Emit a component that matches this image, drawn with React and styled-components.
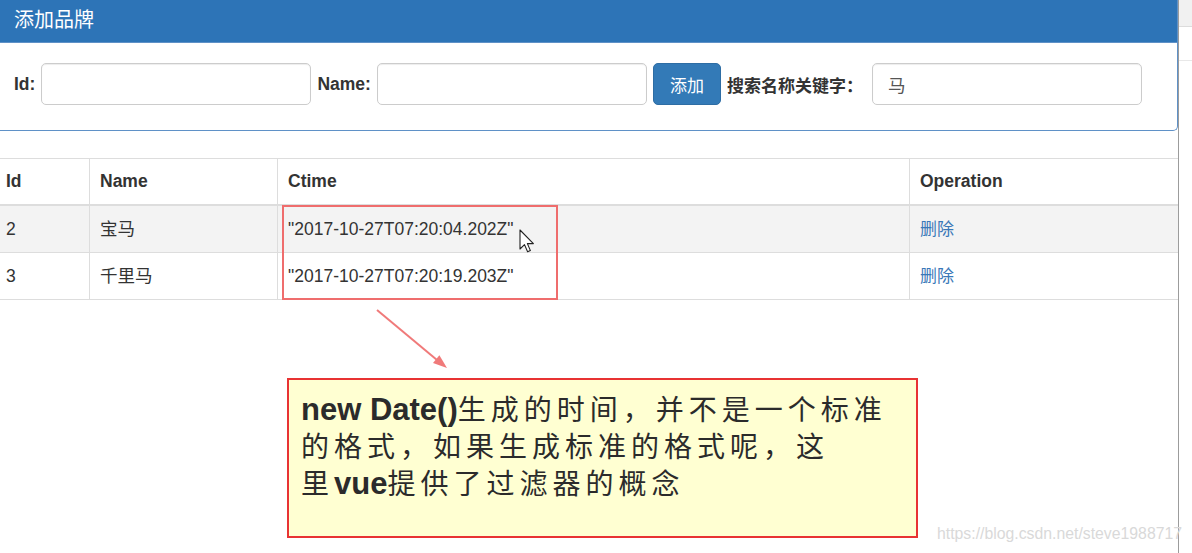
import React from "react";
import styled, { createGlobalStyle } from "styled-components";

const GlobalStyle = createGlobalStyle`
  html, body { margin: 0; padding: 0; background: #fff; }
  body {
    font-family: "Liberation Sans", "Noto Sans CJK SC", sans-serif;
    color: #333;
    overflow: hidden;
  }
  * { box-sizing: border-box; }
`;

const Screen = styled.div`
  position: relative;
  width: 1192px;
  height: 553px;
  display: flex;
  overflow: hidden;
  background: #fff;
`;

const Main = styled.div`
  flex: 0 0 1178px;
  min-width: 0;
`;

const Inner = styled.div`
  margin-left: -5px;
  width: 1183px;
`;

const SideRail = styled.div`
  flex: 1;
  border-left: 1px solid #9c9c9c;
  display: flex;
  flex-direction: column;
`;

const RailBand = styled.div`
  height: ${(p) => p.$h}px;
  background: ${(p) => p.$bg || "#fff"};
  border-bottom: 1px solid ${(p) => p.$line || "#e4e4e4"};
`;

const Panel = styled.div`
  border: 1px solid #5f91c7;
  border-top: none;
  border-radius: 0 0 5px 5px;
  margin-bottom: 27px;
  overflow: hidden;
`;

const PanelHeading = styled.div`
  height: 43px;
  background: #2d74b7;
  padding: 8px 18px 0;
  border-bottom: 1px solid #5f91c7;
`;

const PanelTitle = styled.h3`
  margin: 0;
  font-family: "Noto Sans CJK SC", "Liberation Sans", sans-serif;
  font-size: 20px;
  font-weight: 400;
  line-height: 22px;
  color: #fff;
`;

const PanelBody = styled.div`
  padding: 20px 18px 25px;
`;

const FormRow = styled.div`
  display: flex;
  align-items: center;
  gap: 6px;
`;

const Label = styled.label`
  font-size: 17.5px;
  font-weight: 700;
  color: #333;
  white-space: nowrap;
`;

const HanLabel = styled(Label)`
  font-family: "Noto Sans CJK SC", sans-serif;
  font-size: 17px;
  margin-right: 3px;
`;

const Input = styled.input`
  width: 270px;
  height: 42px;
  border: 1px solid #ccc;
  border-radius: 5px;
  padding: 0 15px;
  font-family: "Noto Sans CJK SC", "Liberation Sans", sans-serif;
  font-size: 17.5px;
  color: #555;
  box-shadow: inset 0 1px 1px rgba(0, 0, 0, 0.075);
  outline: none;
  background: #fff;
`;

const Button = styled.button`
  height: 42px;
  padding: 0 16px;
  background: #337ab7;
  border: 1px solid #2e6da4;
  border-radius: 5px;
  color: #fff;
  font-family: "Noto Sans CJK SC", sans-serif;
  font-size: 17px;
  cursor: pointer;
`;

const Table = styled.table`
  width: 1183px;
  table-layout: fixed;
  border-collapse: collapse;
  border: 1px solid #ddd;
`;

const Th = styled.th`
  text-align: left;
  font-size: 17.5px;
  font-weight: 700;
  line-height: 25px;
  padding: 10px;
  border: 1px solid #ddd;
  border-bottom: 2px solid #ddd;
  color: #333;
`;

const Tr = styled.tr`
  background: ${(p) => (p.$striped ? "#f3f3f3" : "#fff")};
`;

const Td = styled.td`
  font-family: "Liberation Sans", "Noto Sans CJK SC", sans-serif;
  font-size: 17.5px;
  line-height: 24px;
  height: 47px;
  padding: 0 10px;
  border: 1px solid #ddd;
  color: #333;
  white-space: nowrap;
  vertical-align: middle;
`;

const Link = styled.a`
  color: #3a78b8;
  text-decoration: none;
  font-family: "Noto Sans CJK SC", sans-serif;
  font-size: 17px;
`;

const RedFrame = styled.div`
  position: absolute;
  left: 282px;
  top: 205px;
  width: 276px;
  height: 95px;
  border: 2px solid #ef6d6d;
  pointer-events: none;
`;

const Overlay = styled.svg`
  position: absolute;
  overflow: visible;
  pointer-events: none;
`;

const Note = styled.div`
  position: absolute;
  left: 287px;
  top: 378px;
  width: 631px;
  height: 160px;
  background: #ffffd2;
  border: 2px solid #e83333;
  padding: 10px 12px 0;
`;

const NoteLine = styled.div`
  height: 37px;
  line-height: 37px;
  white-space: nowrap;
  color: #2b2b2b;
`;

const Latin = styled.span`
  font-family: "Liberation Sans", sans-serif;
  font-weight: 700;
  font-size: 31px;
`;

const Han = styled.span`
  font-family: "Noto Sans CJK SC", sans-serif;
  font-weight: 400;
  font-size: 28px;
  letter-spacing: 5px;
`;

const Watermark = styled.div`
  position: absolute;
  left: 937px;
  top: 525px;
  font-family: "Liberation Sans", sans-serif;
  font-size: 15.8px;
  color: #d9d9d9;
  white-space: nowrap;
  pointer-events: none;
`;

const rows = [
  { id: 2, name: "宝马", ctime: '"2017-10-27T07:20:04.202Z"' },
  { id: 3, name: "千里马", ctime: '"2017-10-27T07:20:19.203Z"' },
];

export default function App() {
  return (
    <>
      <GlobalStyle />
      <Screen>
        <Main>
          <Inner>
            <Panel>
              <PanelHeading>
                <PanelTitle>添加品牌</PanelTitle>
              </PanelHeading>
              <PanelBody>
                <FormRow>
                  <Label>Id:</Label>
                  <Input />
                  <Label>Name:</Label>
                  <Input />
                  <Button>添加</Button>
                  <HanLabel>搜索名称关键字：</HanLabel>
                  <Input defaultValue="马" />
                </FormRow>
              </PanelBody>
            </Panel>
            <Table>
              <colgroup>
                <col style={{ width: 94 }} />
                <col style={{ width: 188 }} />
                <col style={{ width: 632 }} />
                <col style={{ width: 269 }} />
              </colgroup>
              <thead>
                <tr>
                  <Th>Id</Th>
                  <Th>Name</Th>
                  <Th>Ctime</Th>
                  <Th>Operation</Th>
                </tr>
              </thead>
              <tbody>
                {rows.map((r, i) => (
                  <Tr key={r.id} $striped={i % 2 === 0}>
                    <Td>{r.id}</Td>
                    <Td>{r.name}</Td>
                    <Td>{r.ctime}</Td>
                    <Td>
                      <Link href="#">删除</Link>
                    </Td>
                  </Tr>
                ))}
              </tbody>
            </Table>
          </Inner>
        </Main>
        <SideRail>
          <RailBand $h={27} $bg="#f1f1f1" $line="#dcdcdc" />
          <RailBand $h={34} $line="#e8e8e8" />
        </SideRail>

        <RedFrame />

        <Overlay
          style={{ left: 370, top: 305 }}
          width="85"
          height="70"
          viewBox="0 0 85 70"
        >
          <line x1="7" y1="5" x2="67" y2="55" stroke="#f07a7a" strokeWidth="2" />
          <polygon points="77,63 63,58 69.4,50.3" fill="#f07a7a" />
        </Overlay>

        <Overlay
          style={{ left: 519, top: 229 }}
          width="16"
          height="25"
          viewBox="0 0 16 25"
        >
          <path
            d="M1 1 L1 20 L5.5 15.6 L8.6 22.8 L11.4 21.6 L8.4 14.6 L14.4 14.6 Z"
            fill="#fff"
            stroke="#222"
            strokeWidth="1.1"
            strokeLinejoin="round"
          />
        </Overlay>

        <Note>
          <NoteLine>
            <Latin>new Date()</Latin>
            <Han>生成的时间，并不是一个标准</Han>
          </NoteLine>
          <NoteLine>
            <Han>的格式，如果生成标准的格式呢，这</Han>
          </NoteLine>
          <NoteLine>
            <Han>里</Han>
            <Latin>vue</Latin>
            <Han>提供了过滤器的概念</Han>
          </NoteLine>
        </Note>

        <Watermark>https://blog.csdn.net/steve1988717</Watermark>
      </Screen>
    </>
  );
}
